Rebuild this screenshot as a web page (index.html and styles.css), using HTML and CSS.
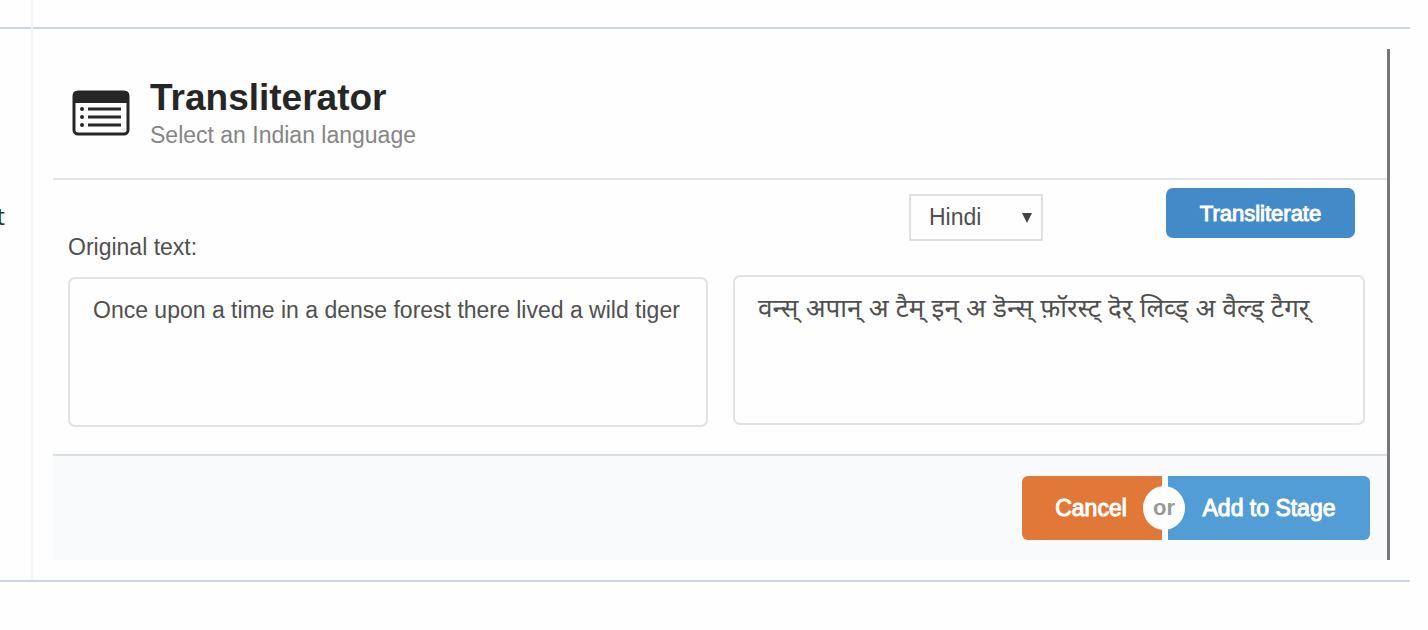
FILE: index.html
```html
<!DOCTYPE html>
<html lang="en">
<head>
<meta charset="utf-8">
<title>Transliterator</title>
<link rel="stylesheet" href="styles.css">
</head>
<body>
<div class="sheet">
  <div class="rule-cell"></div>
  <div class="divider"></div>
  <div class="rule-cell"></div>
  <div class="side"><span class="side-text">t</span></div>
  <main class="main">
    <section class="dialog" aria-labelledby="dialog-title">
      <header class="dialog-header">
        <svg class="dialog-icon" viewBox="0 0 58 46" aria-hidden="true">
          <rect x="2" y="2" width="54" height="42" rx="4" fill="#fff" stroke="#262626" stroke-width="3"/>
          <path d="M1 13V5q0-4 4-4h48q4 0 4 4v8z" fill="#262626"/>
          <path d="M16 19h33M16 27h33M16 35h33" stroke="#262626" stroke-width="3"/>
          <path d="M10 19h0M10 27h0M10 35h0" stroke="#262626" stroke-width="4" stroke-linecap="round"/>
        </svg>
        <div>
          <h1 class="title" id="dialog-title">Transliterator</h1>
          <p class="subtitle">Select an Indian language</p>
        </div>
      </header>
      <div class="dialog-body">
        <div class="column">
          <label class="field-label" for="original">Original text:</label>
          <textarea class="field" id="original">Once upon a time in a dense forest there lived a wild tiger</textarea>
        </div>
        <div class="column">
          <div class="controls">
            <div class="select-wrap">
              <select class="language" aria-label="Language"><option>Hindi</option></select>
              <svg class="arrow" viewBox="0 0 10 10" aria-hidden="true"><path d="M0 0h10L5 10z" fill="#444"/></svg>
            </div>
            <button class="button transliterate" type="button">Transliterate</button>
          </div>
          <textarea class="field result" lang="hi" aria-label="Transliterated text">वन्स् अपान् अ टैम् इन् अ डॆन्स् फ़ॉरस्ट् दॆर् लिव्ड् अ वैल्ड् टैगर्</textarea>
        </div>
      </div>
      <footer class="dialog-footer">
        <div class="choices">
          <button class="button cancel" type="button">Cancel</button>
          <span class="or">or</span>
          <button class="button add" type="button">Add to Stage</button>
        </div>
      </footer>
    </section>
  </main>
</div>
</body>
</html>
```
FILE: styles.css
```css
* { box-sizing: border-box; }

body {
  margin: 0;
  background: #fefefe;
  color: #505050;
  font-family: "Liberation Sans", "Noto Sans", sans-serif;
  font-size: 23px;
  line-height: 27px;
}

.sheet {
  display: grid;
  grid-template-columns: 31px 2px 1fr;
  grid-template-rows: 29px auto;
  margin-right: 18px;
  border-bottom: 2px solid #cbd5e4;
}
.rule-cell { border-bottom: 2px solid #cbd5e4; }
.divider { grid-column: 2; grid-row: 1 / 3; background: #f4f4f4; }
.side {
  grid-column: 1;
  grid-row: 2;
  display: flex;
  justify-content: flex-end;
  width: 5px;
  padding-top: 174px;
  overflow: hidden;
  color: #183b2b;
  font-family: "Open Sans", sans-serif;
}
.main { grid-column: 3; grid-row: 2; padding: 20px; }

.dialog { border-right: 3px solid #777; }

.dialog-header {
  display: flex;
  align-items: center;
  gap: 20px;
  padding: 27px 19px 28px;
  border-bottom: 2px solid #e4e4e4;
}
.dialog-icon { width: 58px; height: 46px; }
.title { margin: 0; color: #262626; font-size: 37px; line-height: 44px; }
.subtitle { margin: 0; color: #858585; line-height: 30px; }

.dialog-body {
  display: grid;
  grid-template-columns: 640fr 632fr;
  align-items: start;
  gap: 25px;
  padding: 8px 22px 27px 15px;
}
.column { display: flex; flex-direction: column; }
.field-label { margin: 46px 0 16px; }
.field {
  display: block;
  width: 100%;
  height: 150px;
  padding: 18px 20px 18px 23px;
  border: 2px solid #e2e2e2;
  border-radius: 7px;
  background: #fefefe;
  color: #505050;
  font: inherit;
  resize: none;
  overflow: hidden;
}
.result { font-size: 26px; }

.controls {
  display: flex;
  justify-content: flex-end;
  gap: 123px;
  height: 50px;
  margin-bottom: 37px;
  padding-right: 10px;
}
.select-wrap { position: relative; align-self: flex-start; margin-top: 6px; }
.language {
  appearance: none;
  display: block;
  width: 134px;
  height: 47px;
  padding: 0 18px;
  border: 2px solid #e0e0e0;
  border-radius: 0;
  background: #fefefe;
  color: #505050;
  font: inherit;
}
.arrow { position: absolute; top: 19px; right: 11px; width: 10px; height: 10px; }

.button {
  border: 0;
  color: #fff;
  font: inherit;
  -webkit-text-stroke: 1px #fff;
}
.transliterate {
  width: 189px;
  height: 50px;
  border-radius: 7px;
  background: #428bc8;
  font-size: 22px;
}

.dialog-footer {
  display: flex;
  justify-content: flex-end;
  padding: 20px 17px;
  border-top: 2px solid #dcdfe2;
  background: #f9fafc;
}
.choices { position: relative; display: flex; gap: 6px; background: #fefefe; border-radius: 7px; }
.cancel {
  width: 140px;
  height: 64px;
  padding: 0 2px 0 0;
  border-radius: 6px 0 0 6px;
  background: #e27838;
}
.add { width: 202px; height: 64px; border-radius: 0 6px 6px 0; background: #529dd5; }
.or {
  position: absolute;
  top: 10px;
  left: 121px;
  width: 42px;
  height: 44px;
  border-radius: 50%;
  background: #fff;
  color: #999;
  font-size: 22px;
  font-weight: bold;
  line-height: 44px;
  text-align: center;
}
```
